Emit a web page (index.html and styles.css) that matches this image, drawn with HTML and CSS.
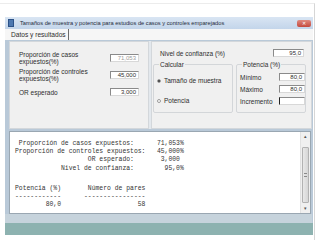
FILE: index.html
```html
<!DOCTYPE html>
<html lang="es">
<head>
    <meta charset="UTF-8">
    <title>Tamaños de muestra y potencia</title>
    <link rel="stylesheet" href="styles.css">
</head>
<body>
    <div class="slide">
        <div class="window">
            <div class="titlebar">
                <span class="app-icon"></span>
                <span class="title">Tamaños de muestra y potencia para estudios de casos y controles emparejados</span>
                <span class="close">&#x2715;</span>
            </div>
            <div class="tabs">
                <span class="tab">Datos y resultados</span>
            </div>
            <div class="client">
                <div class="panels">
                    <div class="panel panel-left">
                        <div class="field row-casos">
                            <span class="label">Proporción de casos<br>expuestos(%)</span>
                            <span class="box disabled">71,053</span>
                        </div>
                        <div class="field row-controles">
                            <span class="label">Proporción de controles<br>expuestos(%)</span>
                            <span class="box">45,000</span>
                        </div>
                        <div class="field row-or">
                            <span class="label">OR esperado</span>
                            <span class="box">3,000</span>
                        </div>
                    </div>
                    <div class="panel panel-right">
                        <div class="field row-conf">
                            <span class="label">Nivel de confianza (%)</span>
                            <span class="box box-conf">95,0</span>
                        </div>
                        <div class="groups">
                            <fieldset class="group group-calc">
                                <legend>Calcular</legend>
                                <div class="radio-row"><span class="radio checked"></span>Tamaño de muestra</div>
                                <div class="radio-row"><span class="radio"></span>Potencia</div>
                            </fieldset>
                            <fieldset class="group group-pot">
                                <legend>Potencia (%)</legend>
                                <div class="pot-row"><span class="label">Mínimo</span><span class="box box-pot">80,0</span></div>
                                <div class="pot-row"><span class="label">Máximo</span><span class="box box-pot">80,0</span></div>
                                <div class="pot-row"><span class="label">Incremento</span><span class="box box-pot box-focus"></span></div>
                            </fieldset>
                        </div>
                    </div>
                </div>
                <div class="output">
                    <div class="output-text">
<pre class="out-block"> Proporción de casos expuestos:      71,053%
Proporción de controles expuestos:   45,000%
                   OR esperado:       3,000
            Nivel de confianza:        95,0%</pre>
<pre class="out-block out-table">Potencia (%)       Número de pares
------------      ----------------
        80,0                    58</pre>
                    </div>
                    <div class="scrollbar">
                        <span class="arrow">&#x25B4;</span>
                        <span class="thumb"><span class="grip"></span></span>
                        <span class="arrow">&#x25BE;</span>
                    </div>
                </div>
                <div class="status"></div>
                <div class="taskbar"></div>
            </div>
        </div>
    </div>
</body>
</html>
```

FILE: styles.css
```css
body {
    margin: 0;
    background: #ffffff;
    font-family: "Liberation Sans", Arial, sans-serif;
    color: #2e2e2e;
}

.slide {
    width: 315px;
    height: 237px;
    margin-top: 3px;
    border-top: 1px solid #ececec;
    border-right: 1px solid #d6d6d6;
    padding: 13px 0 0 5px;
    box-sizing: border-box;
}

.window {
    width: 308px;
}

/* title bar */
.titlebar {
    height: 12px;
    display: flex;
    align-items: center;
    background: linear-gradient(#d9e5f3, #c3d5ea);
    padding-left: 3px;
}
.app-icon {
    width: 4px;
    height: 6px;
    background: #4d78b0;
    border: 1px solid #2c5288;
    margin-right: 6px;
}
.title {
    font-size: 5.7px;
    color: #1d2a3a;
    flex: 1;
    white-space: nowrap;
}
.close {
    width: 14px;
    height: 7px;
    margin-right: 2px;
    border-radius: 2px;
    background: linear-gradient(#e08a80, #c4493d);
    color: #ffffff;
    font-size: 5px;
    line-height: 7px;
    text-align: center;
}

/* tab strip */
.tabs {
    height: 11px;
    background: #f6f6f6;
    display: flex;
    align-items: center;
}
.tab {
    font-size: 6.6px;
    padding: 0 2px 0 6px;
    height: 11px;
    line-height: 11px;
    border-right: 1px solid #6b6b6b;
}

/* client area */
.client {
    background: #b9c9d8;
    padding: 1px 1px 0 4px;
}
.panels {
    display: flex;
    gap: 2px;
    height: 88px;
    background: #e3e8ed;
}
.panel {
    background: #f0f0f0;
    border: 1px solid #d3d7db;
    box-sizing: border-box;
}
.panel-left {
    width: 140px;
    padding: 9px 0 0 9px;
}
.panel-right {
    flex: 1;
    padding: 7px 0 0 1px;
}

.field {
    display: flex;
    align-items: center;
}
.label {
    font-size: 6.5px;
    line-height: 7px;
}
.panel-left .label {
    width: 91px;
}
.row-controles {
    margin-top: 3px;
}
.row-or {
    margin-top: 6px;
}
.box {
    display: block;
    width: 29px;
    height: 8px;
    box-sizing: border-box;
    background: #ffffff;
    border: 1px solid #8a8a8a;
    border-right-color: #d8d8d8;
    border-bottom-color: #d8d8d8;
    font-size: 6px;
    line-height: 6px;
    text-align: right;
    padding-right: 2px;
}
.box.disabled {
    color: #9a9a9a;
}

.row-conf {
    margin-left: 7px;
    height: 8px;
}
.row-conf .label {
    width: 113px;
}
.box-conf {
    width: 31px;
}

.groups {
    display: flex;
    gap: 3px;
    margin-top: 4px;
}
.group {
    margin: 0;
    padding: 0;
    border: 1px solid #d3d6d9;
    border-radius: 2px;
    box-sizing: border-box;
    height: 52px;
}
.group legend {
    font-size: 6.5px;
    line-height: 7px;
    padding: 0 1px;
    margin-left: 2px;
}
.group-calc {
    width: 80px;
    padding: 9px 0 0 3px;
}
.group-pot {
    width: 70px;
    padding: 5px 0 0 3px;
}

.radio-row {
    display: flex;
    align-items: center;
    font-size: 6.5px;
    line-height: 7px;
    height: 7px;
    margin-bottom: 13px;
}
.radio {
    width: 4px;
    height: 4px;
    border: 1px solid #9a9a9a;
    border-radius: 50%;
    background: #ffffff;
    margin-right: 3px;
    box-sizing: border-box;
}
.radio.checked {
    background: radial-gradient(circle, #333 0 1px, #ffffff 1.3px);
}

.pot-row {
    display: flex;
    align-items: center;
    height: 8px;
    margin-bottom: 4px;
}
.pot-row .label {
    width: 39px;
}
.box-pot {
    width: 26px;
}
.box-focus {
    border-left: 1px solid #222;
}

/* results text */
.output {
    margin-top: 2px;
    height: 83px;
    display: flex;
    background: #ffffff;
    border: 1px solid #9aa7b2;
    box-sizing: border-box;
    margin-right: 1px;
}
.output-text {
    flex: 1;
    padding: 8px 0 0 5px;
}
.out-block {
    margin: 0;
    font-family: "Liberation Mono", "Courier New", monospace;
    font-size: 6.4px;
    line-height: 8.2px;
    color: #333333;
}
.out-table {
    margin-top: 12px;
}

.scrollbar {
    width: 9px;
    background: #f0f0f0;
    border-left: 1px solid #e2e2e2;
    display: flex;
    flex-direction: column;
    align-items: center;
}
.arrow {
    font-size: 5px;
    line-height: 9px;
    height: 9px;
    color: #555;
}
.thumb {
    width: 7px;
    height: 56px;
    margin: 6px 0 auto;
    background: linear-gradient(90deg, #e8e8e8, #d6d6d6);
    border: 1px solid #b2b2b2;
    border-radius: 1px;
    box-sizing: border-box;
    display: flex;
    align-items: center;
    justify-content: center;
}
.grip {
    width: 3px;
    height: 4px;
    border-top: 1px solid #8a8a8a;
    border-bottom: 1px solid #8a8a8a;
    box-sizing: border-box;
}

.status {
    height: 9px;
    background: #c6d3dc;
    margin-left: -4px;
}
.taskbar {
    height: 12px;
    background: #8db2b0;
    margin: 0 -1px 0 -4px;
}
```
